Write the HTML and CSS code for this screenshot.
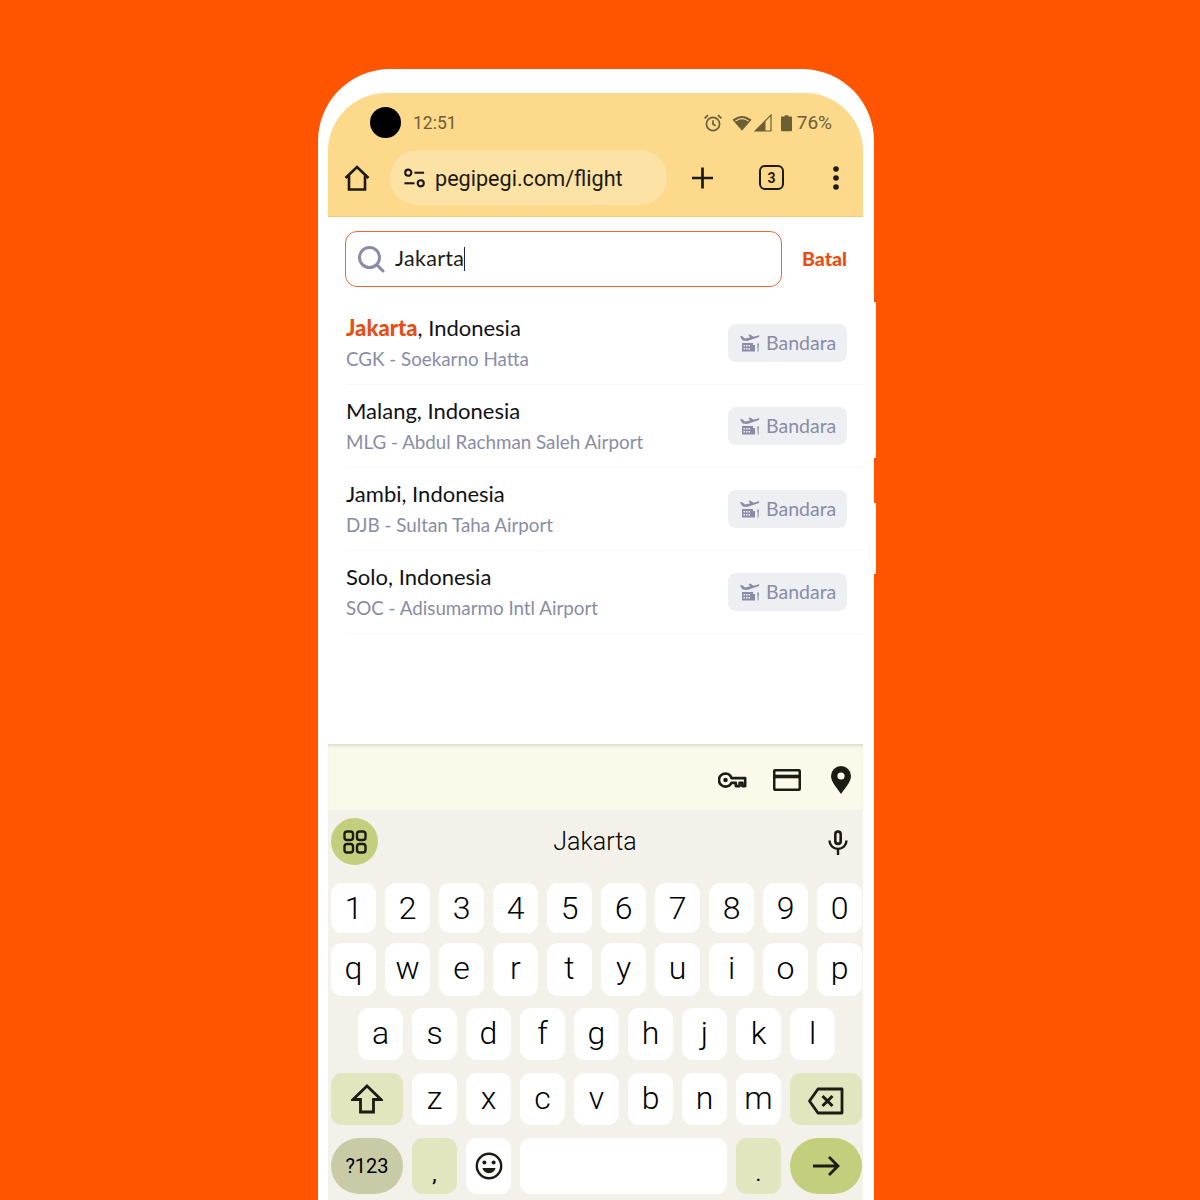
FILE: index.html
```html
<!DOCTYPE html>
<html lang="en">
<head>
    <meta charset="UTF-8">
    <meta name="viewport" content="width=device-width, initial-scale=1.0">
    <title>Pegipegi flight search</title>
    <link rel="stylesheet" href="styles.css">
</head>
<body>
    <svg class="defs" width="0" height="0">
        <symbol id="airport" viewBox="0 0 20 18">
            <path d="M0 2.5 L2 2 L5 4.6 L10 3.4 L8.6 0.9 L10 0.5 L13.6 2.7 L18 1.4 Q19.6 1.2 19.4 2.2 Q19 3 17.6 3.4 L7 7 L2.6 6.6 Z" fill="#8a8ca6"/>
            <path d="M2 9 H13 V11 H15 V17.5 H2 Z" fill="#8a8ca6"/>
            <path d="M3.5 11 H5 V12.5 H3.5 Z M6 11 H7.5 V12.5 H6 Z M8.5 11 H10 V12.5 H8.5 Z M3.5 14 H5 V15.5 H3.5 Z M6 14 H7.5 V15.5 H6 Z M8.5 14 H10 V15.5 H8.5 Z" fill="#eeeff3"/>
            <path d="M17.2 9.5 H19 L18.6 14 V17.5 H17.6 V14 Z" fill="#8a8ca6"/>
        </symbol>
    </svg>

    <div class="phone">
        <span class="side-btn side-btn-a"></span>
        <span class="side-btn side-btn-b"></span>
        <div class="screen">
            <header class="browser-head">
                <div class="status-bar">
                    <span class="camera"></span>
                    <span class="clock">12:51</span>
                    <div class="status-icons">
                        <svg width="20" height="20" viewBox="0 0 20 20" fill="none" stroke="#6b6035" stroke-width="1.7">
                            <circle cx="10" cy="11" r="6.6"/>
                            <path d="M10 7.2 V11.3 L12.6 12.8"/>
                            <path d="M1.6 5.4 L5 2.2 M18.4 5.4 L15 2.2"/>
                        </svg>
                        <svg class="wifi" width="20" height="18" viewBox="0 0 22 18">
                            <path d="M0.5 5.5 Q11 -3 21.5 5.5 L11 17.5 Z" fill="#6b6035"/>
                            <path d="M3.4 6.4 Q11 0.8 18.6 6.4 L17.8 7.3 Q11 2.6 4.2 7.3 Z" fill="#fdd98c"/>
                        </svg>
                        <svg class="signal" width="18" height="18" viewBox="0 0 18 18">
                            <path d="M17 1 V17 H1 Z" fill="none" stroke="#6b6035" stroke-width="1.2"/>
                            <path d="M11.5 7 V17 H1 Z" fill="#6b6035"/>
                        </svg>
                        <svg class="battery" width="11" height="18" viewBox="0 0 12 18">
                            <path d="M4 0.5 H8 V2 H11 Q12 2 12 3 V17 Q12 18 11 18 H1 Q0 18 0 17 V3 Q0 2 1 2 H4 Z" fill="#6b6035"/>
                        </svg>
                        <span class="battery-pct">76%</span>
                    </div>
                </div>
                <div class="url-row">
                    <svg class="home-icon" width="28" height="28" viewBox="0 0 28 28" fill="none" stroke="#1c1a12" stroke-width="2.6" stroke-linejoin="miter">
                        <path d="M2.5 14 L14 3 L25.5 14 M6 11.5 V25.5 H22 V11.5"/>
                    </svg>
                    <div class="url-pill">
                        <svg width="23" height="22" viewBox="0 0 24 22" fill="none" stroke="#1c1a12" stroke-width="2.2">
                            <circle cx="5.5" cy="5.5" r="3.2"/>
                            <path d="M12 5.5 H22"/>
                            <path d="M1.5 16.5 H12"/>
                            <circle cx="18.5" cy="16.5" r="3.2"/>
                        </svg>
                        <span class="url-text">pegipegi.com/flight</span>
                    </div>
                    <svg class="plus-icon" width="23" height="24" viewBox="0 0 24 24" stroke="#1c1a12" stroke-width="2.8">
                        <path d="M12 1 V23 M1 12 H23"/>
                    </svg>
                    <span class="tabs-btn">3</span>
                    <svg class="more-icon" width="8" height="24" viewBox="0 0 8 24" fill="#1c1a12">
                        <circle cx="4" cy="3" r="2.8"/>
                        <circle cx="4" cy="12" r="2.8"/>
                        <circle cx="4" cy="21" r="2.8"/>
                    </svg>
                </div>
            </header>

            <div class="search-row">
                <div class="search-box">
                    <svg width="28" height="28" viewBox="0 0 28 28" fill="none" stroke="#8a8ca6" stroke-width="3">
                        <circle cx="12.5" cy="12.5" r="10"/>
                        <path d="M20 20 L26 26" stroke-linecap="round"/>
                    </svg>
                    <span class="search-value">Jakarta</span><span class="caret"></span>
                </div>
                <span class="cancel">Batal</span>
            </div>

            <ul class="results">
                <li class="result">
                    <div class="result-text">
                        <div class="city"><b>Jakarta</b>, Indonesia</div>
                        <div class="airport">CGK - Soekarno Hatta</div>
                    </div>
                    <span class="tag"><svg width="20" height="18"><use href="#airport"/></svg>Bandara</span>
                </li>
                <li class="result">
                    <div class="result-text">
                        <div class="city">Malang, Indonesia</div>
                        <div class="airport">MLG - Abdul Rachman Saleh Airport</div>
                    </div>
                    <span class="tag"><svg width="20" height="18"><use href="#airport"/></svg>Bandara</span>
                </li>
                <li class="result">
                    <div class="result-text">
                        <div class="city">Jambi, Indonesia</div>
                        <div class="airport">DJB - Sultan Taha Airport</div>
                    </div>
                    <span class="tag"><svg width="20" height="18"><use href="#airport"/></svg>Bandara</span>
                </li>
                <li class="result">
                    <div class="result-text">
                        <div class="city">Solo, Indonesia</div>
                        <div class="airport">SOC - Adisumarmo Intl Airport</div>
                    </div>
                    <span class="tag"><svg width="20" height="18"><use href="#airport"/></svg>Bandara</span>
                </li>
            </ul>

            <div class="autofill-bar">
                <svg width="30" height="18" viewBox="0 0 32 18" fill="none" stroke="#1c1c14" stroke-width="2.8">
                    <path d="M8 2 A7 7 0 1 0 8 16 A7 7 0 0 0 14.4 12 H19 V15.5 H23 V12 H26 V15.5 H29 V7 H14.4 A7 7 0 0 0 8 2 Z" stroke-linejoin="round"/>
                    <circle cx="8" cy="9" r="2.4" fill="#1c1c14" stroke="none"/>
                </svg>
                <svg width="28" height="22" viewBox="0 0 28 22" fill="none" stroke="#1c1c14" stroke-width="2.6">
                    <rect x="1.2" y="1.2" width="25.6" height="19.6" rx="1.6"/>
                    <path d="M1.2 7.5 H26.8" stroke-width="3.6"/>
                </svg>
                <svg class="pin" width="20" height="28" viewBox="0 0 20 28">
                    <path fill-rule="evenodd" d="M10 0 A10 10 0 0 1 20 10 C20 16 14 22 10 28 C6 22 0 16 0 10 A10 10 0 0 1 10 0 Z M10 6.4 A3.6 3.6 0 1 0 10 13.6 A3.6 3.6 0 0 0 10 6.4 Z" fill="#1c1c14"/>
                </svg>
            </div>

            <div class="keyboard">
                <div class="suggest-row">
                    <span class="apps-btn">
                        <svg width="24" height="24" viewBox="0 0 24 24" fill="none" stroke="#1c1c14" stroke-width="2.4">
                            <rect x="1.5" y="1.5" width="8.5" height="8.5" rx="2.6"/>
                            <rect x="14" y="1.5" width="8.5" height="8.5" rx="2.6"/>
                            <rect x="1.5" y="14" width="8.5" height="8.5" rx="2.6"/>
                            <rect x="14" y="14" width="8.5" height="8.5" rx="2.6"/>
                        </svg>
                    </span>
                    <span class="suggestion">Jakarta</span>
                    <svg class="mic" width="20" height="26" viewBox="0 0 20 26" fill="none" stroke="#1c1c14" stroke-width="2.4">
                        <rect x="6" y="1.2" width="8" height="15" rx="4" fill="#1c1c14" stroke="none"/>
                        <rect x="8.6" y="4" width="2.8" height="9.5" rx="1.4" fill="#f3f1e9" stroke="none"/>
                        <path d="M1.5 11.5 A8.5 8.5 0 0 0 18.5 11.5 M10 20 V26"/>
                    </svg>
                </div>

                <div class="key-row row-1">
                    <span class="key">1</span><span class="key">2</span><span class="key">3</span><span class="key">4</span><span class="key">5</span><span class="key">6</span><span class="key">7</span><span class="key">8</span><span class="key">9</span><span class="key">0</span>
                </div>
                <div class="key-row row-2">
                    <span class="key">q</span><span class="key">w</span><span class="key">e</span><span class="key">r</span><span class="key">t</span><span class="key">y</span><span class="key">u</span><span class="key">i</span><span class="key">o</span><span class="key">p</span>
                </div>
                <div class="key-row row-3">
                    <span class="key">a</span><span class="key">s</span><span class="key">d</span><span class="key">f</span><span class="key">g</span><span class="key">h</span><span class="key">j</span><span class="key">k</span><span class="key">l</span>
                </div>
                <div class="key-row row-4">
                    <span class="key key-wide key-mod">
                        <svg width="32" height="30" viewBox="0 0 32 30" fill="none" stroke="#1c1c14" stroke-width="2.8" stroke-linejoin="miter">
                            <path d="M16 2 L30 15.5 H22.5 V28 H9.5 V15.5 H2 Z"/>
                        </svg>
                    </span>
                    <span class="key">z</span><span class="key">x</span><span class="key">c</span><span class="key">v</span><span class="key">b</span><span class="key">n</span><span class="key">m</span>
                    <span class="key key-wide key-mod key-back">
                        <svg width="36" height="28" viewBox="0 0 36 28" fill="none" stroke="#1c1c14" stroke-width="2.8">
                            <path d="M10 2 H34 V26 H10 L1.5 14 Z" stroke-linejoin="round"/>
                            <path d="M14.5 9 L24.5 19 M24.5 9 L14.5 19" stroke-width="3"/>
                        </svg>
                    </span>
                </div>
                <div class="key-row row-5">
                    <span class="key key-wide key-symbols">?123</span>
                    <span class="key key-mod key-punct">,</span>
                    <span class="key">
                        <svg width="28" height="28" viewBox="0 0 28 28" fill="none" stroke="#1c1c14" stroke-width="2.4">
                            <circle cx="14" cy="14" r="12.2"/>
                            <circle cx="9.4" cy="10.6" r="2" fill="#1c1c14" stroke="none"/>
                            <circle cx="18.6" cy="10.6" r="2" fill="#1c1c14" stroke="none"/>
                            <path d="M7.4 16 H20.6 A6.8 6.8 0 0 1 7.4 16 Z" fill="#1c1c14" stroke="none"/>
                        </svg>
                    </span>
                    <span class="key key-space"></span>
                    <span class="key key-mod key-punct">.</span>
                    <span class="key key-wide key-enter">
                        <svg width="28" height="22" viewBox="0 0 28 22" fill="none" stroke="#1c1c14" stroke-width="2.8">
                            <path d="M1 11 H26 M17 2 L26 11 L17 20"/>
                        </svg>
                    </span>
                </div>
            </div>
        </div>
    </div>
</body>
</html>
```

FILE: styles.css
```css
* {
    box-sizing: border-box;
}
html, body {
    height: 1200px;
    overflow: hidden;
}
body {
    margin: 0;
    background: #ff5500;
    font-family: Roboto, "Liberation Sans", sans-serif;
    color: #1c1c14;
}
.defs {
    position: absolute;
}

.phone {
    position: relative;
    width: 556px;
    height: 1131px;
    margin: 69px 0 0 318px;
    padding: 24px 11px 0 10px;
    background: #fff;
    border-radius: 72px 72px 0 0;
}
.side-btn {
    position: absolute;
    left: 100%;
    width: 2px;
    background: #fff;
}
.side-btn-a {
    top: 233px;
    height: 156px;
}
.side-btn-b {
    top: 434px;
    height: 71px;
}
.screen {
    display: flex;
    flex-direction: column;
    height: 1107px;
}

.browser-head {
    height: 124px;
    padding: 0 11px 0 15px;
    background: #fdd98c;
    border-bottom: 1px solid #ecca84;
    border-radius: 58px 58px 0 0;
}
.status-bar {
    display: flex;
    align-items: center;
    height: 57px;
    padding: 2px 20px 0 27px;
}
.camera {
    width: 31px;
    height: 31px;
    border-radius: 50%;
    background: #000;
}
.clock {
    margin-left: 12px;
    font-size: 17.5px;
    color: #6b6035;
}
.status-icons {
    display: flex;
    align-items: center;
    margin-left: auto;
    color: #6b6035;
}
.wifi {
    margin-left: 9px;
}
.signal {
    margin-left: 2px;
}
.battery {
    margin-left: 9px;
}
.battery-pct {
    margin-left: 5px;
    font-size: 19px;
}

.url-row {
    display: flex;
    align-items: center;
    height: 55px;
}
.home-icon {
    margin-right: 19px;
}
.url-pill {
    display: flex;
    align-items: center;
    gap: 9px;
    width: 277px;
    height: 55px;
    padding-left: 13px;
    background: #fde2a6;
    border-radius: 28px;
}
.url-text {
    padding-top: 1px;
    font-size: 21.6px;
    color: #1c1a12;
}
.plus-icon {
    margin-left: 24px;
}
.tabs-btn {
    display: flex;
    align-items: center;
    justify-content: center;
    width: 25px;
    height: 25px;
    margin-left: 45px;
    border: 2.8px solid #1c1a12;
    border-radius: 6px;
    font-size: 14px;
    font-weight: 700;
}
.more-icon {
    margin-left: 48px;
}

.search-row {
    display: flex;
    align-items: center;
    height: 85px;
    padding: 0 16px 2px 17px;
}
.search-box {
    display: flex;
    align-items: center;
    width: 437px;
    height: 56px;
    padding-left: 11px;
    border: 1.8px solid #ec6a30;
    border-radius: 12px;
}
.search-value {
    margin: 0 0 1px 10px;
    font-size: 21.5px;
    font-family: Lato, sans-serif;
    letter-spacing: 0.3px;
}
.caret {
    width: 1px;
    height: 24px;
    background: #1c2540;
}
.cancel {
    margin-left: auto;
    padding-bottom: 1px;
    font-family: Lato, sans-serif;
    font-size: 19.5px;
    font-weight: 900;
    color: #ea4c12;
}

.results {
    flex: 1;
    margin: 0;
    padding: 0;
    list-style: none;
}
.result {
    display: flex;
    align-items: center;
    justify-content: space-between;
    height: 83px;
    margin-left: 18px;
    padding-right: 16px;
    border-bottom: 1px solid #f7f7f9;
}
.city {
    font-family: Lato, sans-serif;
    font-size: 22px;
    line-height: 28px;
    color: #111216;
}
.city b {
    font-weight: 900;
    color: #ea4c12;
}
.airport {
    margin-top: 4px;
    font-family: Lato, sans-serif;
    font-size: 18.8px;
    line-height: 26px;
    color: #8a8ca6;
}
.tag {
    display: flex;
    align-items: center;
    gap: 6px;
    width: 119px;
    height: 38px;
    padding: 0 0 1px 12px;
    background: #eeeff3;
    border-radius: 8px;
    font-family: Lato, sans-serif;
    font-size: 19.5px;
    color: #8a8ca6;
}

.autofill-bar {
    display: flex;
    align-items: center;
    justify-content: flex-end;
    gap: 25px;
    height: 66px;
    padding: 5px 12px 0 0;
    background: #fbfaea;
    box-shadow: inset 0 3px 3px -1px rgba(0, 0, 0, 0.12);
}
.pin {
    margin-left: 5px;
}

.keyboard {
    height: 390px;
    padding-left: 3px;
    background: #f3f1e9;
}
.suggest-row {
    display: flex;
    align-items: center;
    height: 73px;
    padding: 0 15px 12px 0;
}
.apps-btn {
    display: flex;
    align-items: center;
    justify-content: center;
    width: 47px;
    height: 47px;
    margin-top: 2px;
    border-radius: 50%;
    background: #c4cf7e;
}
.suggestion {
    flex: 1;
    padding: 2px 16px 0 0;
    text-align: center;
    font-size: 25px;
    font-weight: 300;
    color: #000;
}
.mic {
    margin-top: 2px;
}
.key-row {
    display: flex;
    gap: 9px;
    margin-bottom: 12px;
}
.row-1 {
    height: 50px;
    margin-bottom: 10px;
}
.row-2 {
    height: 53px;
}
.row-3 {
    height: 52px;
    padding-left: 27px;
    margin-bottom: 13px;
}
.row-4 {
    height: 52px;
    margin-bottom: 13px;
}
.row-5 {
    height: 56px;
}
.key {
    display: flex;
    align-items: center;
    justify-content: center;
    width: 45px;
    background: #fff;
    border-radius: 11px;
    font-size: 32px;
    font-weight: 300;
    color: #000;
}
.row-2 .key, .row-3 .key, .row-4 .key {
    padding-bottom: 3px;
}
.row-1 .key {
    padding-bottom: 1px;
}
.row-4 .key-back {
    padding: 3px 0 0;
}
.row-4 .key-mod {
    padding-bottom: 0;
}
.key-wide {
    width: 72px;
}
.key-mod {
    background: #e3e5bf;
}
.key-symbols {
    background: #c9cba6;
    border-radius: 28px;
    font-size: 20px;
    font-weight: 400;
}
.key-punct {
    align-items: flex-end;
    padding-bottom: 8px;
    font-size: 22px;
    font-weight: 400;
}
.key-space {
    width: 207px;
}
.key-enter {
    background: #c4cf7e;
    border-radius: 28px;
}
```
